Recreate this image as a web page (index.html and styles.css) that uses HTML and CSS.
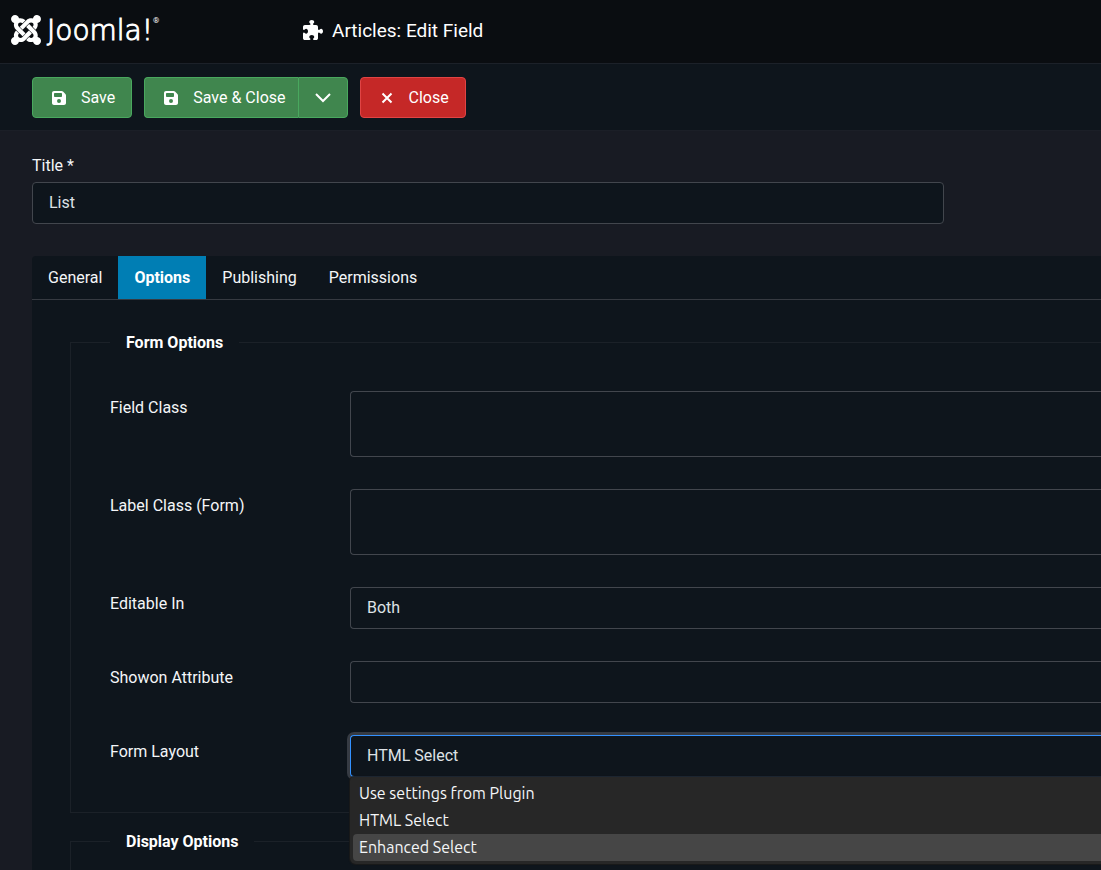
FILE: index.html
```html
<!DOCTYPE html>
<html lang="en">
<head>
<meta charset="utf-8">
<meta name="viewport" content="width=device-width, initial-scale=1">
<title>Articles: Edit Field</title>
<link rel="stylesheet" href="styles.css">
</head>
<body>
<header class="header">
  <a class="brand" href="#">
    <svg class="brand-mark" viewBox="0 32 448 448" aria-hidden="true"><path d="M.6 92.1C.6 58.8 27.4 32 60.4 32c30 0 54.5 21.9 59.2 50.2 32.6-7.6 67.1.6 96.5 30l-44.3 44.3c-20.5-20.5-42.6-16.3-55.4-3.5-14.3 14.3-14.3 37.9 0 52.2l99.5 99.5-44 44.3c-87.7-87.2-49.7-49.7-99.8-99.7-26.8-26.5-35-64.8-24.8-98.9C20.4 144.6.6 120.7.6 92.1zm129.5 116.4l44.3 44.3c10-10 89.7-89.7 99.7-99.8 14.3-14.3 37.6-14.3 51.9 0 12.8 12.8 17 35-3.5 55.4l44 44.3c31.2-31.2 38.5-67.6 28.9-101.2 29.2-4.1 51.9-29.2 51.9-59.5 0-33.2-26.8-60.1-59.8-60.1-30.3 0-55.4 22.5-59.5 51.6-33.8-9.9-71.7-1.5-98.3 25.1-18.3 19.1-71.1 71.5-99.6 99.9zm266.3 152.2c8.2-32.7-.9-68.5-26.3-93.9-11.8-12.2 5 4.7-99.5-99.7l-44.3 44.3 99.7 99.7c14.3 14.3 14.3 37.6 0 51.9-12.8 12.8-35 17-55.4-3.5l-44 44.3c27.6 30.2 68 38.8 102.7 28 5.5 27.4 29.7 48.1 58.9 48.1 33 0 59.8-26.8 59.8-60.1 0-30.2-22.5-55-51.6-59.1zm-84.3-53.1l-44-44.3c-87 86.4-50.4 50.4-99.7 99.8-14.3 14.3-37.6 14.3-51.9 0-13.1-13.4-16.9-35.3 3.2-55.4l-44-44.3c-30.2 30.2-38 65.2-29.5 98.3-26.7 6-46.2 29.9-46.2 58.2C0 453.2 26.8 480 59.8 480c28.6 0 52.5-19.8 58.6-46.7 32.7 8.2 68.5-.6 94.2-26 32.1-32 12.2-12.4 99.5-99.7z"/></svg>
    <span class="brand-name">Joomla!</span><span class="brand-reg">®</span>
  </a>
  <h1 class="page-title">
    <svg class="page-icon" viewBox="0 0 512 512" aria-hidden="true"><path d="M192 104.8c0-9.2-5.8-17.3-13.2-22.8C167.2 73.3 160 61.3 160 48c0-26.5 28.7-48 64-48s64 21.5 64 48c0 13.3-7.2 25.3-18.8 34c-7.4 5.5-13.2 13.6-13.2 22.8v0c0 12.8 10.4 23.2 23.2 23.2H336c26.5 0 48 21.5 48 48v56.8c0 12.8 10.4 23.2 23.2 23.2v0c9.2 0 17.3-5.8 22.8-13.2c8.7-11.6 20.7-18.8 34-18.8c26.5 0 48 28.7 48 64s-21.5 64-48 64c-13.3 0-25.3-7.2-34-18.8c-5.5-7.4-13.6-13.2-22.8-13.2v0c-12.8 0-23.2 10.4-23.2 23.2V464c0 26.5-21.5 48-48 48H279.2c-12.8 0-23.2-10.4-23.2-23.2v0c0-9.2 5.8-17.3 13.2-22.8c11.6-8.7 18.8-20.7 18.8-34c0-26.5-28.7-48-64-48s-64 21.5-64 48c0 13.3 7.2 25.3 18.8 34c7.4 5.5 13.2 13.6 13.2 22.8v0c0 12.8-10.4 23.2-23.2 23.2H48c-26.5 0-48-21.5-48-48V343.2C0 330.4 10.4 320 23.2 320v0c9.2 0 17.3 5.8 22.8 13.2C54.7 344.8 66.7 352 80 352c26.5 0 48-28.7 48-64s-21.5-64-48-64c-13.3 0-25.3 7.2-34 18.8C40.5 250.2 32.4 256 23.2 256v0C10.4 256 0 245.6 0 232.8V176c0-26.5 21.5-48 48-48H168.8c12.8 0 23.2-10.4 23.2-23.2v0z"/></svg>
    Articles: Edit Field
  </h1>
</header>

<div class="toolbar">
  <button class="btn btn-success" type="button">
    <svg class="btn-icon" viewBox="-96 0 640 512" aria-hidden="true"><path d="M64 32C28.7 32 0 60.7 0 96V416c0 35.3 28.7 64 64 64H384c35.3 0 64-28.7 64-64V173.3c0-17-6.7-33.3-18.7-45.3L352 50.7C340 38.7 323.7 32 306.7 32H64zm0 96c0-17.7 14.3-32 32-32H288c17.7 0 32 14.3 32 32v64c0 17.7-14.3 32-32 32H96c-17.7 0-32-14.3-32-32V128zM224 288a64 64 0 1 1 0 128 64 64 0 1 1 0-128z"/></svg>
    Save
  </button>
  <div class="btn-group">
    <button class="btn btn-success btn-main" type="button">
      <svg class="btn-icon" viewBox="-96 0 640 512" aria-hidden="true"><path d="M64 32C28.7 32 0 60.7 0 96V416c0 35.3 28.7 64 64 64H384c35.3 0 64-28.7 64-64V173.3c0-17-6.7-33.3-18.7-45.3L352 50.7C340 38.7 323.7 32 306.7 32H64zm0 96c0-17.7 14.3-32 32-32H288c17.7 0 32 14.3 32 32v64c0 17.7-14.3 32-32 32H96c-17.7 0-32-14.3-32-32V128zM224 288a64 64 0 1 1 0 128 64 64 0 1 1 0-128z"/></svg>
      Save &amp; Close
    </button>
    <button class="btn btn-success btn-toggle" type="button" aria-label="More save options">
      <svg class="toggle-icon" viewBox="0 0 16 16" aria-hidden="true"><path d="M1 4l7 7 7-7"/></svg>
    </button>
  </div>
  <button class="btn btn-danger" type="button">
    <svg class="btn-icon btn-icon-x" viewBox="0 0 20 16" aria-hidden="true"><path d="M5.500 3.500l9 9M14.500 3.500l-9 9"/></svg>
    Close
  </button>
</div>

<main class="content">
  <div class="title-field">
    <label for="title">Title *</label>
    <input class="control" id="title" type="text" value="List">
  </div>

  <section class="panel">
    <div class="tabs" role="tablist">
      <button class="tab" type="button" role="tab" aria-selected="false">General</button>
      <button class="tab tab-active" type="button" role="tab" aria-selected="true">Options</button>
      <button class="tab" type="button" role="tab" aria-selected="false">Publishing</button>
      <button class="tab" type="button" role="tab" aria-selected="false">Permissions</button>
    </div>
    <div class="tab-body">
      <fieldset class="group">
        <legend>Form Options</legend>
        <div class="fields">
          <div class="field">
            <label for="field-class">Field Class</label>
            <textarea class="control open-end" id="field-class"></textarea>
          </div>
          <div class="field">
            <label for="label-class">Label Class (Form)</label>
            <textarea class="control open-end" id="label-class"></textarea>
          </div>
          <div class="field">
            <label for="editable-in">Editable In</label>
            <select class="control open-end" id="editable-in">
              <option>Both</option>
            </select>
          </div>
          <div class="field">
            <label for="showon">Showon Attribute</label>
            <input class="control open-end" id="showon" type="text">
          </div>
          <div class="field">
            <label for="form-layout">Form Layout</label>
            <div class="dropdown">
              <select class="control open-end control-focus" id="form-layout">
                <option>Use settings from Plugin</option>
                <option selected>HTML Select</option>
                <option>Enhanced Select</option>
              </select>
              <ul class="menu" role="listbox" aria-label="Form Layout">
                <li class="menu-item" role="option">Use settings from Plugin</li>
                <li class="menu-item" role="option">HTML Select</li>
                <li class="menu-item menu-item-active" role="option">Enhanced Select</li>
              </ul>
            </div>
          </div>
        </div>
      </fieldset>
      <fieldset class="group">
        <legend>Display Options</legend>
      </fieldset>
    </div>
  </section>
</main>
</body>
</html>
```
FILE: styles.css
```css
*,
*::before,
*::after {
  box-sizing: border-box;
}

html {
  overflow: hidden;
}

body {
  margin: 0;
  height: 100vh;
  overflow: hidden;
  background: #181b23;
  color: #f4f6f8;
  font: 16px/24px Roboto, "Liberation Sans", sans-serif;
}

button,
input,
select,
textarea {
  font: inherit;
  color: inherit;
}

.header {
  display: flex;
  align-items: center;
  height: 64px;
  padding: 0 0 3px 11px;
  background: #0a0d11;
  border-bottom: 1px solid #1c2129;
}

.brand {
  display: flex;
  align-items: center;
  width: 292px;
  color: #fff;
  text-decoration: none;
}

.brand-mark {
  width: 30px;
  height: 30px;
  margin-right: 6px;
  fill: #fff;
}

.brand-name {
  padding-top: 2px;
  font: 200 28px/32px "DejaVu Sans Light", "DejaVu Sans", sans-serif;
  -webkit-text-stroke: 1px #fff;
}

.brand-reg {
  align-self: flex-start;
  font-size: 8px;
  line-height: 16px;
}

.page-title {
  display: flex;
  align-items: center;
  gap: 9px;
  margin: 0;
  color: #fff;
  font-size: 19px;
  line-height: 25px;
  font-weight: 400;
}

.page-icon {
  width: 20px;
  height: 20px;
  fill: #fff;
}

.toolbar {
  display: flex;
  gap: 12px;
  padding: 13px 32px 12px;
  background: #0e151c;
  border-bottom: 1px solid #1b1f27;
}

.btn {
  display: flex;
  align-items: center;
  gap: 12px;
  height: 41px;
  padding: 0 16px;
  border: 1px solid;
  border-radius: 4px;
  color: #fff;
}

.btn-success {
  background: #40864e;
  border-color: #49a85e;
}

.btn-danger {
  background: #c52827;
  border-color: #e04444;
}

.btn-icon {
  width: 20px;
  height: 16px;
  fill: #fff;
}

.btn-icon-x {
  fill: none;
  stroke: #fff;
  stroke-width: 2;
}

.btn-group {
  display: flex;
}

.btn-main {
  padding-right: 12px;
  border-right: 0;
  border-radius: 4px 0 0 4px;
}

.btn-toggle {
  justify-content: center;
  width: 50px;
  border-radius: 0 4px 4px 0;
}

.toggle-icon {
  width: 16px;
  height: 16px;
  flex: none;
  fill: none;
  stroke: #fff;
  stroke-width: 2;
}

.content {
  padding: 23px 0 0 32px;
}

.title-field {
  display: grid;
  gap: 4px;
  max-width: 912px;
  margin-bottom: 32px;
}

.control {
  display: block;
  width: 100%;
  height: 42px;
  margin: 0;
  padding: 0 16px;
  background: #0e151c;
  border: 1px solid #42464d;
  border-radius: 4px;
  outline: 0;
  color: #dee2e6;
  appearance: none;
}

input.control {
  padding-bottom: 2px;
}

textarea.control {
  height: 66px;
  padding: 8px 16px;
  resize: none;
}

.open-end {
  border-right: 0;
  border-radius: 4px 0 0 4px;
}

.control-focus {
  border-color: #3391ff;
  box-shadow: 0 0 0 3px #363b43;
}

.panel {
  background: #0e151c;
  border-radius: 4px 0 0 0;
}

.tabs {
  display: flex;
  border-bottom: 1px solid #363a41;
}

.tab {
  height: 43px;
  padding: 0 16px;
  background: none;
  border: 0;
}

.tab-active {
  background: #007eb4;
  color: #fff;
  font-weight: 700;
}

.tab-body {
  display: grid;
  gap: 15px;
  padding: 29px 0 0 38px;
}

.group {
  min-width: 0;
  margin: 0;
  padding: 0 0 35px 39px;
  border: 1px solid #1b2128;
  border-right: 0;
}

.group legend {
  padding: 2px 16px 0;
  color: #fff;
  font-weight: 700;
}

.fields {
  display: grid;
  gap: 32px;
  padding-top: 36px;
}

.field {
  display: grid;
  grid-template-columns: 240px 1fr;
}

.field label {
  padding-top: 5px;
}

.dropdown {
  position: relative;
}

.menu {
  position: absolute;
  z-index: 1;
  top: 100%;
  left: 0;
  right: 0;
  margin: 0;
  padding: 3px 0 3px 3px;
  background: #272727;
  border-radius: 4px 0 0 6px;
  box-shadow: 0 0 1px 1px #1a1a1a;
  list-style: none;
  font-family: Ubuntu, "Noto Sans", sans-serif;
}

.menu-item {
  padding: 0 6px;
  line-height: 27px;
}

.menu-item-active {
  background: #464646;
  border-radius: 4px 0 0 4px;
}
```
